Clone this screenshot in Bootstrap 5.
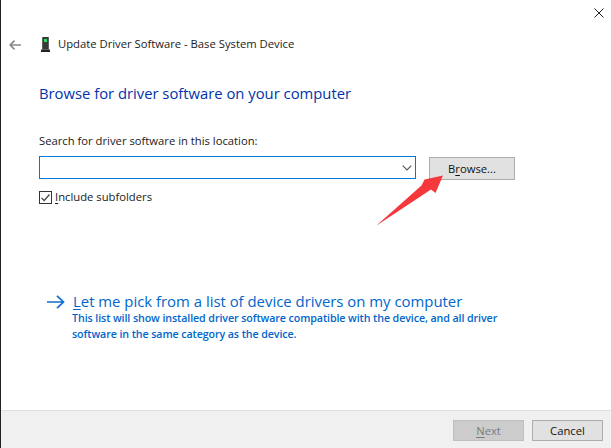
<!DOCTYPE html>
<html lang="en">
<head>
<meta charset="utf-8">
<title>Update Driver Software</title>
<link href="https://cdn.jsdelivr.net/npm/bootstrap@5.3.0/dist/css/bootstrap.min.css" rel="stylesheet">
<style>
html,body{height:100%;margin:0;overflow:hidden}
body{font-family:"Open Sans","Liberation Sans",sans-serif;font-size:11.25px;color:#1a1a1a;background:#fff}
.wiz{width:611px;height:448px;border-left:1px solid #222;position:relative}
.wiz-body{height:410px;padding:0 0 0 38px}
.close-x{width:611px;height:25px;padding:0 8px 0 0;margin-left:-38px}
.head-row{height:39px;margin-left:-38px;padding-left:8px}
.back-ic{width:12px;height:10px;margin-right:20px}
.dev-ic{width:9px;height:15px;margin-right:8px}
.head-txt{font-size:11.25px}
.page-title{font-size:14.8px;font-weight:400;color:#0033aa;margin:0;line-height:20px;padding-top:19px}
.loc-lbl{margin-top:30px;line-height:16px}
.loc-row{margin-top:7px;height:23px}
.combo{width:377px;height:23px;border:1px solid #0078d7;padding-right:3px}
.browse-btn{width:86px;height:23px;margin-left:13px;margin-top:1px;background:#e1e1e1;border:1px solid #adadad;border-radius:0;font-size:11.25px;padding:0;color:#111;line-height:20px}
.sub-row{margin-top:10px;height:16px}
.chk{width:13px;height:13px;margin-right:3px}
.pick{margin-top:86px;margin-left:8px}
.pick-arrow{width:18px;height:14px;margin-right:8px;margin-top:4px}
.pick-title{font-size:14.9px;color:#0066cc;line-height:20px;white-space:nowrap}
.pick-desc{font-size:10.7px;color:#0066cc;line-height:16px;margin-top:-1px;margin-left:-1px;font-weight:600;white-space:nowrap;letter-spacing:-.1px}
.wiz-foot{height:38px;background:#f0f0f0;border-top:1px solid #dfdfdf;padding:9px 0 0 452px}
.foot-btn{width:71px;height:21px;border:1px solid #adadad;background:#e1e1e1;border-radius:0;font-size:11.25px;padding:0;line-height:18px;color:#111}
.foot-btn:disabled{background:#cccccc;border-color:#bfbfbf;color:#7a7a7a;opacity:1}
.gap-foot{margin-left:8px}
.u{text-decoration:underline;text-underline-offset:2px;text-decoration-thickness:1px}
.red-arrow{position:absolute;left:376px;top:170px;width:70px;height:58px}
</style>
</head>
<body>
<div class="wiz">
  <div class="wiz-body">
    <div class="close-x d-flex justify-content-end align-items-center">
      <svg width="10" height="10" viewBox="0 0 10 10"><path d="M.5.5l9 9M9.500.5l-9 9" stroke="#222" stroke-width="1" fill="none"/></svg>
    </div>
    <div class="head-row d-flex align-items-center">
      <svg class="back-ic" viewBox="0 0 12 10"><path d="M12 5H1.500M5.500.7L1.200 5l4.300 4.300" stroke="#8a8a8a" stroke-width="1.700" fill="none"/></svg>
      <svg class="dev-ic" viewBox="0 0 9 15"><path d="M1.200 0h6.600v12.500H1.200z" fill="#3a3a3a"/><path d="M0 12.500h9V15H0z" fill="#222"/><rect x="3" y="2" width="3" height="3" fill="#30e060"/></svg>
      <span class="head-txt">Update Driver Software - Base System Device</span>
    </div>
    <h1 class="page-title">Browse for driver software on your computer</h1>
    <div class="loc-lbl">Search for driver software in this location:</div>
    <div class="loc-row d-flex align-items-start">
      <div class="combo d-flex align-items-center justify-content-end">
        <svg width="10" height="6" viewBox="0 0 10 6"><path d="M.7.7L5 5l4.300-4.300" stroke="#555" stroke-width="1.100" fill="none"/></svg>
      </div>
      <button type="button" class="browse-btn btn">B<span class="u">r</span>owse...</button>
    </div>
    <div class="sub-row d-flex align-items-center">
      <svg class="chk" viewBox="0 0 13 13"><rect x=".5" y=".5" width="12" height="12" fill="#fff" stroke="#333"/><path d="M2.500 6.800l2.700 2.700 5.300-6" stroke="#444" stroke-width="1.200" fill="none"/></svg>
      <span><span class="u">I</span>nclude subfolders</span>
    </div>
    <div class="pick d-flex align-items-start">
      <svg class="pick-arrow" viewBox="0 0 18 14"><path d="M0 7h16.500M10 .8L16.500 7 10 13.200" stroke="#0a6fd0" stroke-width="1.700" fill="none"/></svg>
      <div>
        <div class="pick-title"><span class="u">L</span>et me pick from a list of device drivers on my computer</div>
        <div class="pick-desc">This list will show installed driver software compatible with the device, and all driver<br>software in the same category as the device.</div>
      </div>
    </div>
  </div>
  <div class="wiz-foot d-flex align-items-start">
    <button type="button" class="foot-btn btn" disabled><span class="u">N</span>ext</button>
    <button type="button" class="foot-btn btn gap-foot">Cancel</button>
  </div>
  <svg class="red-arrow" viewBox="0 0 70 58"><path d="M-1 56L44.500 15.500 47.500 9.500 66 5.500 58.500 23 54 19.500Z" fill="#f5383c"/></svg>
</div>
<script src="https://cdn.jsdelivr.net/npm/bootstrap@5.3.0/dist/js/bootstrap.bundle.min.js"></script>
</body>
</html>
